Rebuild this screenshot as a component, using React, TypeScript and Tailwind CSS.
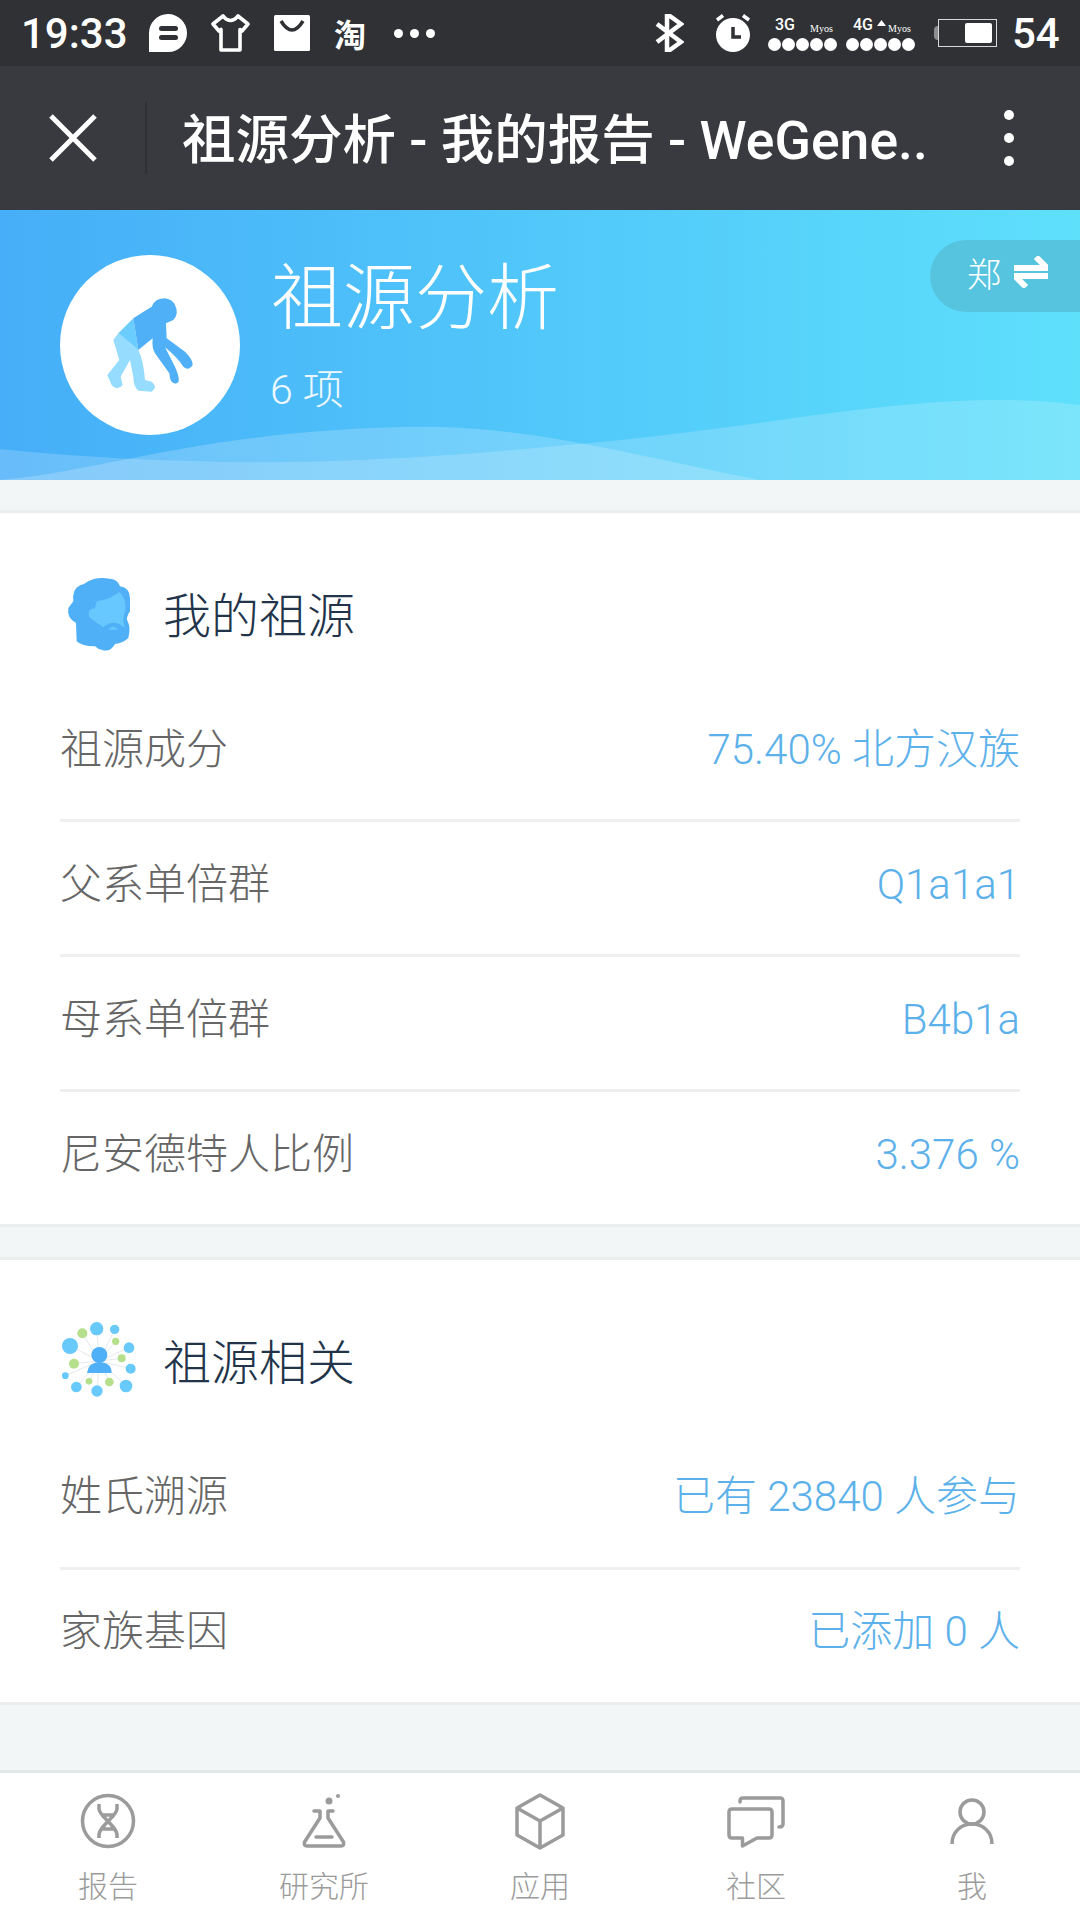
import React from "react";

const CJK = "font-['Roboto','Noto_Sans_CJK_SC',sans-serif]";

function Dots() {
  return (
    <div className="flex gap-[1px]">
      {[0, 1, 2, 3, 4].map((i) => (
        <div key={i} className="h-[13px] w-[13px] rounded-full bg-white" />
      ))}
    </div>
  );
}

function Signal({ label, arrow }: { label: string; arrow?: boolean }) {
  return (
    <div className="flex w-[69px] flex-col">
      <div className="flex h-[20px] items-start text-white">
        <span className="ml-[7px] w-[21px] font-['Roboto',sans-serif] text-[16px] leading-[14px] font-medium">{label}</span>
        {arrow ? (
          <svg width="9" height="6" viewBox="0 0 9 6" className="mt-[2px] ml-[3px]">
            <path d="M4.5 0L9 6H0Z" fill="#fff" />
          </svg>
        ) : (
          <span className="w-[12px]" />
        )}
        <span className="mt-[6px] ml-[2px] font-['Liberation_Serif',serif] text-[10px] leading-[10px]">Myos</span>
      </div>
      <Dots />
    </div>
  );
}

function StatusBar() {
  return (
    <div className="flex h-[66px] items-center bg-[#2f3135] pl-[21px] text-white">
      <span className="mt-[1px] w-[105px] font-['Roboto',sans-serif] text-[42px] leading-none font-medium whitespace-nowrap">19:33</span>
      <svg width="39" height="38" viewBox="0 0 39 38" className="ml-[23px]">
        <path d="M0 38V19A19 19 0 1 1 19.5 38Z" fill="#fff" />
        <rect x="10" y="12" width="19" height="5" rx="2.5" fill="#2f3135" />
        <rect x="10" y="21" width="19" height="5" rx="2.5" fill="#2f3135" />
      </svg>
      <svg width="39" height="38" viewBox="0 0 39 38" className="ml-[23px]">
        <path d="M12 2L2 10L8 17L10 15.5V36H29V15.5L31 17L37 10L27 2Q19.500 11 12 2Z" fill="none" stroke="#fff" strokeWidth="3.600" strokeLinejoin="round" />
      </svg>
      <svg width="36" height="36" viewBox="0 0 36 36" className="ml-[24px]">
        <rect width="36" height="36" rx="1.500" fill="#fff" />
        <path d="M7 6Q18 24 29 6" fill="none" stroke="#2f3135" strokeWidth="3.500" />
      </svg>
      <span className="ml-[24px] w-[36px] font-['Noto_Sans_CJK_SC',sans-serif] text-[32px] leading-none font-bold">淘</span>
      <div className="ml-[24px] flex gap-[7px]">
        <div className="h-[9px] w-[9px] rounded-full bg-white" />
        <div className="h-[9px] w-[9px] rounded-full bg-white" />
        <div className="h-[9px] w-[9px] rounded-full bg-white" />
      </div>
      <svg width="29" height="38" viewBox="0 0 29 38" className="ml-[220px]">
        <path d="M2 10L26 28L12 38V0L26 10L2 28" fill="none" stroke="#fff" strokeWidth="4.500" />
      </svg>
      <svg width="38" height="38" viewBox="0 0 38 38" className="ml-[30px]">
        <circle cx="19" cy="21" r="17" fill="#fff" />
        <path d="M19 13V23H27" fill="none" stroke="#2f3135" strokeWidth="3.500" />
        <path d="M3 6L9 1.500M35 6L29 1.500" stroke="#fff" strokeWidth="3.500" />
      </svg>
      <div className="ml-[16px] flex gap-[9px] pt-[2px]">
        <Signal label="3G" />
        <Signal label="4G" arrow />
      </div>
      <div className="ml-[19px] flex items-center">
        <div className="h-[14px] w-[4px] rounded-l-full bg-[#8d8e90]" />
        <div className="flex h-[28px] w-[59px] items-center justify-end border border-[#d8d8d8] pr-[4px]">
          <div className="h-[20px] w-[27px] rounded-[2px] bg-white" />
        </div>
      </div>
      <span className="mt-[1px] ml-[15px] font-['Roboto',sans-serif] text-[42px] leading-none font-medium">54</span>
    </div>
  );
}

function NavBar() {
  return (
    <div className="flex h-[144px] items-center bg-[#393a3f] text-white">
      <svg width="48" height="48" viewBox="0 0 48 48" className="ml-[49px]">
        <path d="M2 2L46 46M46 2L2 46" stroke="#fff" strokeWidth="5" />
      </svg>
      <div className="ml-[48px] h-[72px] w-[2px] bg-[#303135]" />
      <span className={`mt-[5px] ml-[35px] w-[752px] ${CJK} text-[53.5px] leading-none font-medium whitespace-nowrap`}>
        祖源分析 - 我的报告 - WeGene..
      </span>
      <div className="ml-[70px] flex flex-col gap-[13px]">
        <div className="h-[10px] w-[10px] rounded-full bg-white" />
        <div className="h-[10px] w-[10px] rounded-full bg-white" />
        <div className="h-[10px] w-[10px] rounded-full bg-white" />
      </div>
    </div>
  );
}

function Monkey() {
  return (
    <svg width="180" height="180" viewBox="0 0 180 180">
      <g transform="translate(0 15) scale(0.3333)">
        <path
          d="M175 190L235 240Q250 270 255 330L275 335Q295 350 275 365L235 362Q220 350 220 320L210 270L182 320L188 345Q170 365 155 345L142 315L178 270L160 210Z"
          fill="#95dcff"
        />
        <path d="M220 145L235 240L175 190Z" fill="#6accff" />
        <path
          d="M220 145Q250 125 275 110Q285 85 315 85Q340 90 345 105Q358 130 340 150L318 160L320 205L375 245Q400 270 398 285Q385 305 370 290Q350 260 315 232L345 290Q365 335 350 340Q330 345 328 310L285 250Q275 235 278 205L235 240Z"
          fill="#4fb0f7"
        />
      </g>
    </svg>
  );
}

function Header() {
  return (
    <div className="relative flex h-[270px] items-start overflow-hidden bg-gradient-to-r from-[#46aef8] to-[#5ee0fb] pt-[45px] pl-[60px]">
      <svg width="1080" height="270" viewBox="0 0 1080 270" className="absolute top-0 left-0">
        <path d="M0 239C60 245 120 249 190 251C300 255 420 250 600 232C780 214 880 190 1000 190C1040 190 1065 193 1080 195V270H0Z" fill="#fff" fillOpacity="0.18" />
        <path d="M0 270C100 262 200 222 400 217C520 214 600 238 760 270Z" fill="#fff" fillOpacity="0.2" />
      </svg>
      <div className="relative flex h-[180px] w-[180px] items-center justify-center rounded-full bg-white">
        <Monkey />
      </div>
      <div className="relative ml-[31px] flex flex-col text-white">
        <span className={`${CJK} mt-[6px] text-[72px] leading-[76px] font-light`}>祖源分析</span>
        <span className={`${CJK} mt-[30px] -ml-[1px] text-[41px] leading-[46px] font-light opacity-90`}>6 项</span>
      </div>
      <div className="absolute top-[30px] right-0 flex h-[72px] w-[150px] items-center rounded-l-[36px] bg-[#57c4df] pl-[37px] text-white">
        <span className={`${CJK} -mt-[2px] text-[34px] leading-none font-light`}>郑</span>
        <svg width="34" height="32" viewBox="0 0 34 32" className="-mt-[8px] ml-[13px]">
          <path d="M0 12H33L22 1M34 20H1L12 31" fill="none" stroke="#fff" strokeWidth="6" />
        </svg>
      </div>
    </div>
  );
}

function Row({ label, value, className }: { label: string; value: string; className: string }) {
  return (
    <div className={`flex items-center justify-between ${className}`}>
      <span className={`${CJK} text-[42px] leading-none font-light text-[#666666]`}>{label}</span>
      <span className={`${CJK} text-[42px] leading-none font-light text-[#5db1ea]`}>{value}</span>
    </div>
  );
}

function Card({ icon, title, headClass, children }: { icon: React.ReactNode; title: string; headClass: string; children: React.ReactNode }) {
  return (
    <div className="border-y-[3px] border-[#eceeee] bg-white px-[60px]">
      <div className={`flex items-center ${headClass}`}>
        <div className="-mt-[7px] flex w-[103px] items-center">{icon}</div>
        <span className={`${CJK} text-[48px] leading-none font-light text-[#22344a]`}>{title}</span>
      </div>
      {children}
    </div>
  );
}

function BeardIcon() {
  return (
    <svg width="80" height="90" viewBox="0 0 240 270" className="shrink-0">
      <path
        d="M85 40Q110 25 150 32Q175 35 180 55Q210 60 210 90L210 130Q195 150 205 165Q212 180 205 210Q190 225 165 228Q150 255 125 245Q115 245 105 235Q65 235 50 220L48 165Q20 150 25 120L40 100Q35 65 60 52Q75 48 85 40Z"
        fill="#4fb0f7"
      />
      <path d="M90 125L105 120L110 100Q150 95 178 72Q200 90 196 130Q185 150 195 180Q160 150 130 178Q105 160 90 150Q82 135 90 125Z" fill="#66c8ff" />
      <path d="M145 185Q158 168 175 185Z" fill="#66c8ff" />
    </svg>
  );
}

function NetIcon() {
  const blue: [number, number, number][] = [[90, 135, 24], [170, 83, 20], [224, 85, 14], [267, 140, 16], [272, 203, 15], [258, 255, 19], [171, 270, 17], [109, 258, 16], [76, 224, 10]];
  const green: [number, number, number][] = [[127, 97, 15], [227, 121, 11], [245, 172, 12], [102, 188, 15], [147, 241, 10], [208, 243, 13]];
  return (
    <svg width="76" height="80" viewBox="60 60 228 240" className="shrink-0">
      {[...blue, ...green].map(([x, y], i) => (
        <line key={i} x1="178" y1="180" x2={x} y2={y} stroke="#e4e9ed" strokeWidth="3" />
      ))}
      {blue.map(([x, y, r], i) => (
        <circle key={i} cx={x} cy={y} r={r} fill="#68c9fb" />
      ))}
      {green.map(([x, y, r], i) => (
        <circle key={i} cx={x} cy={y} r={r} fill="#b5df8a" />
      ))}
      <circle cx="178" cy="162" r="24" fill="#4fb0f7" />
      <path d="M141 216Q145 184 178 184Q215 184 215 216Z" fill="#4fb0f7" />
    </svg>
  );
}

function Tab({ label, children }: { label: string; children: React.ReactNode }) {
  return (
    <div className="flex flex-col items-center">
      <svg width="60" height="60" viewBox="0 0 60 60" className="mt-[19px]" fill="none" stroke="#9b9b9b" strokeWidth="3.500">
        {children}
      </svg>
      <span className={`${CJK} mt-[20px] text-[30px] leading-none font-light text-[#9b9b9b]`}>{label}</span>
    </div>
  );
}

function TabBar() {
  return (
    <div className="grid h-[150px] grid-cols-5 border-t-[3px] border-[#e3e8e8] bg-white">
      <Tab label="报告">
        <circle cx="30" cy="29" r="25.500" />
        <path d="M21 12V17C21 24 39 34 39 43V46M39 12V17C39 24 21 34 21 43V46M23 23H37M23 37H37" />
      </Tab>
      <Tab label="研究所">
        <path d="M20 19H26V26L10.500 50Q9.500 54 13 54H47Q50.500 54 49.500 50L34 26V19H39" strokeLinecap="round" strokeLinejoin="round" />
        <path d="M22 45H38" strokeLinecap="round" />
        <circle cx="35" cy="9" r="3.500" fill="#9b9b9b" stroke="none" />
        <circle cx="44" cy="4" r="2" fill="#9b9b9b" stroke="none" />
      </Tab>
      <Tab label="应用">
        <path d="M30 3L53 16V43L30 56L7 43V16Z" strokeLinejoin="round" />
        <path d="M7 16L30 29L53 16M30 29V56" strokeLinejoin="round" />
      </Tab>
      <Tab label="社区">
        <path d="M12 46H16.500V54L31 46H43Q46 46 46 43V20Q46 17 43 17H6Q3 17 3 20V43Q3 46 6 46Z" strokeLinejoin="round" />
        <path d="M14 10V9Q14 6 17 6H54Q57 6 57 9V32Q57 35 53 35" strokeLinecap="round" />
      </Tab>
      <Tab label="我">
        <circle cx="30" cy="20" r="12" />
        <path d="M10 52C10 40 19 32 30 32C41 32 50 40 50 52" />
      </Tab>
    </div>
  );
}

const rowA = "h-[135px] border-b-[3px] border-[#eeefef] pb-[6px]";
const rowB = "h-[135px] border-b-[3px] border-[#eeefef] pb-[9px]";

export default function App() {
  return (
    <div className="flex h-[1920px] w-[1080px] flex-col overflow-hidden bg-[#f2f6f7]">
      <StatusBar />
      <NavBar />
      <Header />
      <div className="h-[30px]" />
      <Card icon={<BeardIcon />} title="我的祖源" headClass="h-[174px] pt-[33px]">
        <Row label="祖源成分" value="75.40% 北方汉族" className={rowA} />
        <Row label="父系单倍群" value="Q1a1a1" className={rowA} />
        <Row label="母系单倍群" value="B4b1a" className={rowA} />
        <Row label="尼安德特人比例" value="3.376 %" className="h-[132px] pb-[6px]" />
      </Card>
      <div className="h-[30px]" />
      <Card icon={<NetIcon />} title="祖源相关" headClass="h-[175px] pt-[33px]">
        <Row label="姓氏溯源" value="已有 23840 人参与" className={rowB} />
        <Row label="家族基因" value="已添加 0 人" className="h-[132px] pb-[9px]" />
      </Card>
      <div className="flex-1" />
      <TabBar />
    </div>
  );
}
